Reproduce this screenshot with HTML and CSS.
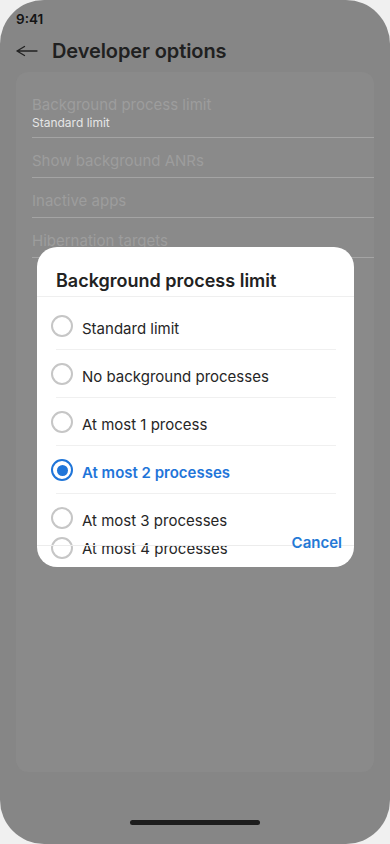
FILE: index.html
```html
<!DOCTYPE html>
<html>
<head>
<meta charset="utf-8">
<link rel="stylesheet" href="styles.css">
</head>
<body>
<div class="phone">
  <div class="status">9:41</div>
  <div class="header">
    <svg class="back" width="22" height="12" viewBox="0 0 22 12"><path d="M1 6H21M1 6L8.5 1.5M1 6L8.5 10.5" fill="none" stroke="#222" stroke-width="1.3" stroke-linecap="round"/></svg>
    <div class="title">Developer options</div>
  </div>
  <div class="card">
    <div class="item first">
      <div class="item-title">Background process limit</div>
      <div class="item-sub">Standard limit</div>
    </div>
    <div class="item"><div class="item-title">Show background ANRs</div></div>
    <div class="item"><div class="item-title">Inactive apps</div></div>
    <div class="item"><div class="item-title">Hibernation targets</div></div>
  </div>
  <div class="home"></div>

  <div class="dialog">
    <div class="dlg-title">Background process limit</div>
    <div class="options">
      <div class="opt"><span class="radio"></span><span class="label">Standard limit</span></div>
      <div class="opt"><span class="radio"></span><span class="label">No background processes</span></div>
      <div class="opt"><span class="radio"></span><span class="label">At most 1 process</span></div>
      <div class="opt selected"><span class="radio"></span><span class="label">At most 2 processes</span></div>
      <div class="opt no-line"><span class="radio"></span><span class="label">At most 3 processes</span></div>
      <div class="opt last no-line"><span class="radio"></span><span class="label">At most 4 processes</span></div>
    </div>
    <div class="action-rule"></div>
    <div class="cancel">Cancel</div>
  </div>
</div>
</body>
</html>
```
FILE: styles.css
```css
* { box-sizing: border-box; }
html, body { margin: 0; padding: 0; }
body {
  background: #f0f0f0;
  font-family: Inter, "Noto Sans", sans-serif;
}
.phone {
  position: relative;
  width: 390px;
  height: 844px;
  background: #868686;
  border-radius: 44px;
  overflow: hidden;
}
.status {
  height: 30px;
  padding: 11px 0 0 16px;
  font-size: 13.5px;
  line-height: 16px;
  font-weight: 600;
  color: #141414;
}
.header {
  height: 41px;
  display: flex;
  align-items: center;
  padding: 1px 16px 0;
  gap: 14px;
}
.back { display: block; }
.title {
  font-size: 20px;
  font-weight: 600;
  color: #202020;
  letter-spacing: -0.1px;
}
.card {
  margin: 1px 16px 0;
  height: 700px;
  background: #8a8a8a;
  border-radius: 12px;
  padding-left: 16px;
}
.item {
  padding: 13px 0 6px;
  border-bottom: 1.5px solid #a4a4a4;
}
.item.first { padding-top: 23px; padding-bottom: 7px; }
.item-title {
  font-size: 15px;
  line-height: 20px;
  color: #9d9d9d;
}
.item-sub {
  font-size: 12px;
  line-height: 15px;
  color: #e6e6e6;
}
.home {
  position: absolute;
  left: 130px;
  top: 820px;
  width: 130px;
  height: 5px;
  border-radius: 3px;
  background: #1d1d1d;
}
.dialog {
  position: absolute;
  left: 37px;
  top: 247px;
  width: 317px;
  height: 320px;
  background: #fff;
  border-radius: 20px;
  overflow: hidden;
}
.dlg-title {
  padding: 22px 0 3px 19px;
  font-size: 18px;
  line-height: 24px;
  font-weight: 600;
  color: #222;
  border-bottom: 1px solid #efefef;
}
.options { padding-top: 5px; }
.opt {
  height: 48px;
  display: flex;
  align-items: center;
  gap: 9px;
  padding-left: 14px;
  background: linear-gradient(#f0f0f0, #f0f0f0) no-repeat left 19px bottom 0 / 280px 1px;
}
.opt.no-line { background: none; }
.opt.last { margin-top: -18px; }
.radio {
  width: 22px;
  height: 22px;
  border-radius: 50%;
  border: 2px solid #c6c6c6;
  flex: none;
  display: flex;
  align-items: center;
  justify-content: center;
}
.label {
  font-size: 15px;
  line-height: 20px;
  color: #262626;
  margin-top: 6px;
}
.opt.last .label { margin-top: 1px; }
.opt.selected .radio { border: 2.5px solid #1f75d9; }
.opt.selected .radio::after {
  content: "";
  width: 11px;
  height: 11px;
  border-radius: 50%;
  background: #1f75d9;
}
.opt.selected .label { color: #1f75d9; font-weight: 600; }
.action-rule {
  position: absolute;
  left: 0;
  right: 0;
  top: 298px;
  height: 1px;
  background: #ececec;
}
.cancel {
  position: absolute;
  right: 12px;
  top: 286px;
  font-size: 15px;
  line-height: 20px;
  font-weight: 600;
  color: #2479d6;
}
```
